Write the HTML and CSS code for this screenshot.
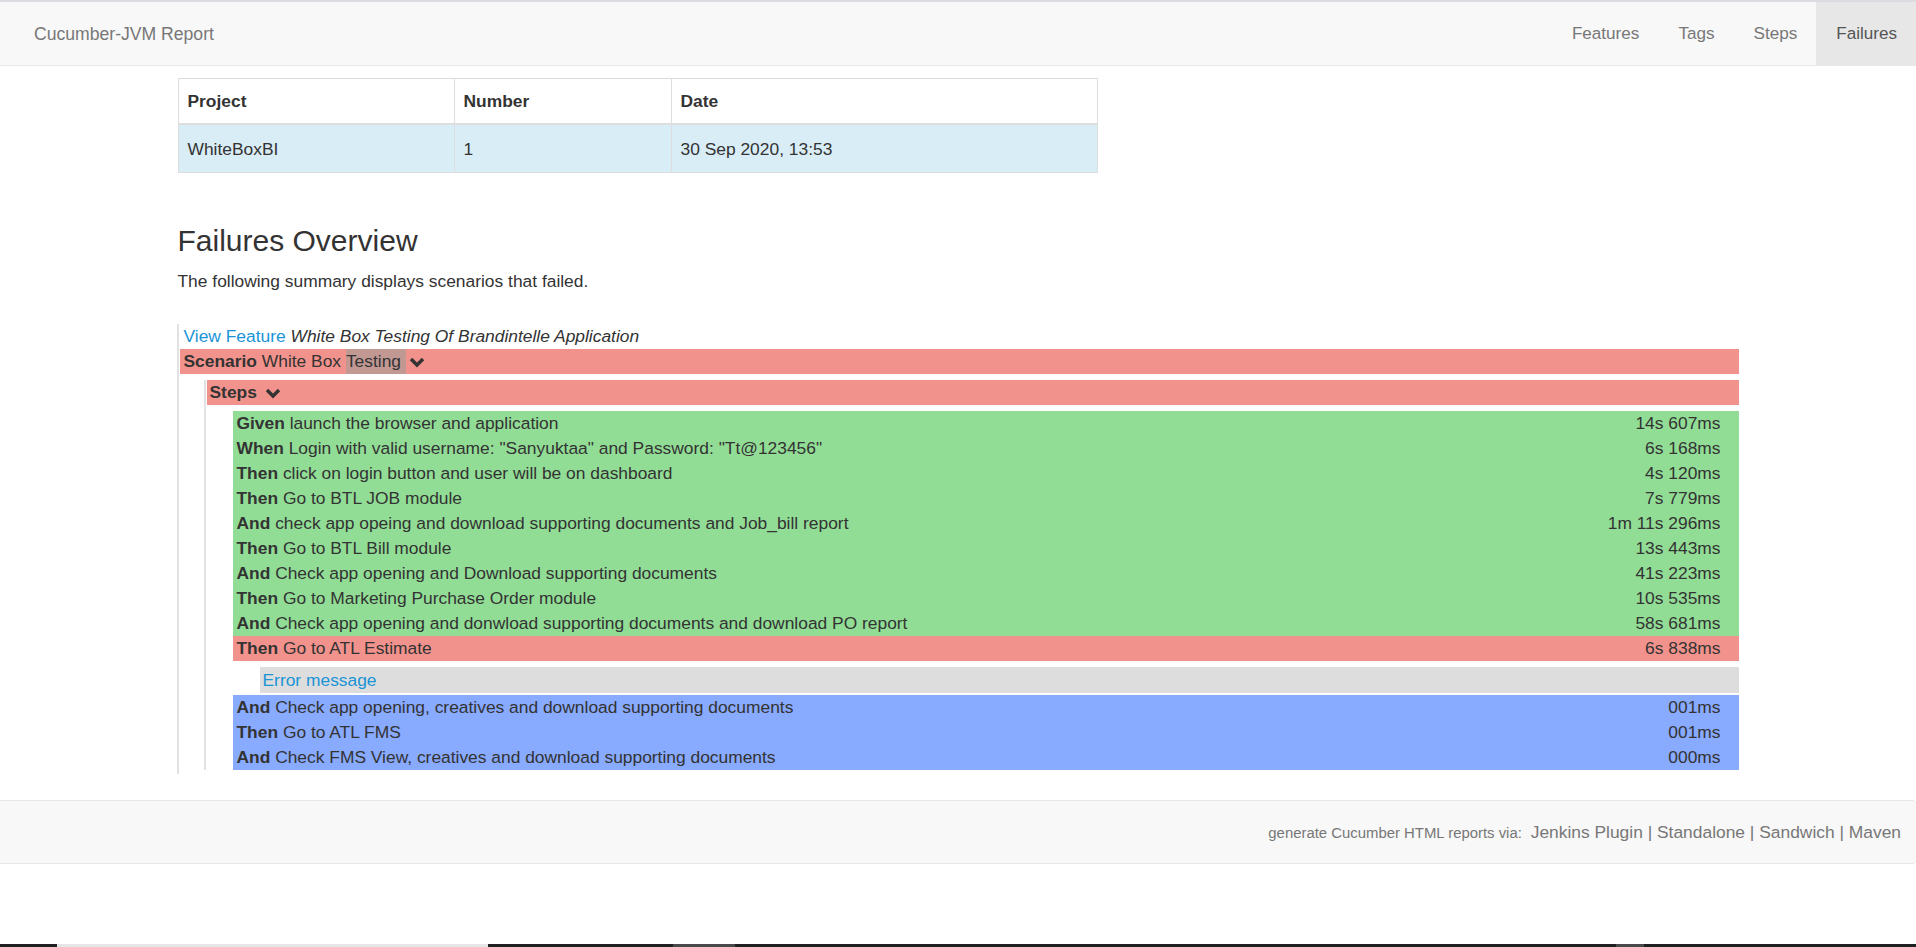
FILE: index.html
```html
<!DOCTYPE html>
<html lang="en">
<head>
<meta charset="utf-8">
<title>Cucumber-JVM Report - Failures Overview</title>
<link rel="stylesheet" href="styles.css">
</head>
<body>
<nav class="navbar">
  <a class="brand" href="#">Cucumber-JVM Report</a>
  <ul class="nav">
    <li><a href="#">Features</a></li>
    <li><a href="#">Tags</a></li>
    <li><a href="#">Steps</a></li>
    <li class="active"><a href="#">Failures</a></li>
  </ul>
</nav>

<main class="container">
  <table class="stats">
    <thead>
      <tr><th class="c1">Project</th><th class="c2">Number</th><th class="c3">Date</th></tr>
    </thead>
    <tbody>
      <tr><td>WhiteBoxBI</td><td>1</td><td>30 Sep 2020, 13:53</td></tr>
    </tbody>
  </table>

  <h2 class="title">Failures Overview</h2>
  <p class="lead">The following summary displays scenarios that failed.</p>

  <section class="feature">
    <div class="feature-line"><a href="#">View Feature</a> <i>White Box Testing Of Brandintelle Application</i></div>
    <div class="bar failed scenario-bar"><b>Scenario</b> White Box <span class="hl">Testing </span><svg class="chev" viewBox="0 0 16 12" width="16" height="12"><polyline points="2,3 8,9 14,3"/></svg></div>
    <div class="steps-wrap">
      <div class="bar failed steps-bar"><b>Steps</b> <svg class="chev" viewBox="0 0 16 12" width="16" height="12"><polyline points="2,3 8,9 14,3"/></svg></div>
      <div class="steps">
        <div class="step passed"><span><b>Given</b> launch the browser and application</span><span class="dur">14s 607ms</span></div>
        <div class="step passed"><span><b>When</b> Login with valid username: "Sanyuktaa" and Password: "Tt@123456"</span><span class="dur">6s 168ms</span></div>
        <div class="step passed"><span><b>Then</b> click on login button and user will be on dashboard</span><span class="dur">4s 120ms</span></div>
        <div class="step passed"><span><b>Then</b> Go to BTL JOB module</span><span class="dur">7s 779ms</span></div>
        <div class="step passed"><span><b>And</b> check app opeing and download supporting documents and Job_bill report</span><span class="dur">1m 11s 296ms</span></div>
        <div class="step passed"><span><b>Then</b> Go to BTL Bill module</span><span class="dur">13s 443ms</span></div>
        <div class="step passed"><span><b>And</b> Check app opening and Download supporting documents</span><span class="dur">41s 223ms</span></div>
        <div class="step passed"><span><b>Then</b> Go to Marketing Purchase Order module</span><span class="dur">10s 535ms</span></div>
        <div class="step passed"><span><b>And</b> Check app opening and donwload supporting documents and download PO report</span><span class="dur">58s 681ms</span></div>
        <div class="step failed"><span><b>Then</b> Go to ATL Estimate</span><span class="dur">6s 838ms</span></div>
        <div class="error"><a href="#">Error message</a></div>
        <div class="step skipped"><span><b>And</b> Check app opening, creatives and download supporting documents</span><span class="dur">001ms</span></div>
        <div class="step skipped"><span><b>Then</b> Go to ATL FMS</span><span class="dur">001ms</span></div>
        <div class="step skipped"><span><b>And</b> Check FMS View, creatives and download supporting documents</span><span class="dur">000ms</span></div>
      </div>
    </div>
  </section>
</main>

<footer class="footer">
  <span class="gen">generate Cucumber HTML reports via:</span> <a href="#">Jenkins Plugin</a> | <a href="#">Standalone</a> | <a href="#">Sandwich</a> | <a href="#">Maven</a>
</footer>

<div class="taskbar">
  <span class="tb-light"></span>
  <span class="tb-gray1"></span>
  <span class="tb-gray2"></span>
</div>
</body>
</html>
```

FILE: styles.css
```css
* { box-sizing: border-box; }

html, body {
  margin: 0;
  padding: 0;
  background: #fff;
}

body {
  font-family: "Liberation Sans", Arial, sans-serif;
  font-size: 17.4px;
  line-height: 24px;
  color: #333;
}

a { text-decoration: none; }

/* Navbar */
.navbar {
  display: flex;
  justify-content: space-between;
  align-items: stretch;
  height: 66px;
  background: #f8f8f8;
  border-top: 2px solid #dcdce0;
  border-bottom: 1px solid #e7e7e7;
}

.brand {
  display: flex;
  align-items: center;
  padding-left: 34px;
  font-size: 17.6px;
  color: #777;
}

.nav {
  display: flex;
  list-style: none;
  margin: 0;
  padding: 0;
}

.nav li a {
  display: flex;
  align-items: center;
  height: 100%;
  padding: 0 19px 0 20px;
  color: #777;
  font-size: 17.1px;
}

.nav li.active a {
  background: #e7e7e7;
  color: #555;
}

/* Main */
.container {
  width: 1561px;
  margin: 0 auto;
}

.stats {
  margin-top: 12px;
  width: 920px;
  border-collapse: collapse;
  border: 1px solid #ddd;
}

.stats th,
.stats td {
  text-align: left;
  padding: 10px 9px;
  border: 1px solid #ddd;
  line-height: 24px;
}

.stats th {
  font-weight: bold;
  border-bottom: 2px solid #ddd;
}

.stats td {
  padding-top: 12px;
  padding-bottom: 11px;
  background: #d9edf7;
}

.stats .c1 { width: 276px; }
.stats .c2 { width: 217px; }

.title {
  margin: 51px 0 0;
  font-size: 30px;
  font-weight: normal;
  line-height: 33px;
  color: #333;
}

.lead {
  margin: 12px 0 0;
}

/* Feature block */
.feature {
  margin-top: 31px;
  margin-left: -1px;
  padding: 0 0 4px 1px;
  border-left: 2px solid #e2e2e2;
}

.feature-line {
  padding-left: 4px;
  height: 24px;
  margin-bottom: 1px;
}

.feature-line a,
.error a {
  color: #1a94d6;
}

.bar {
  height: 25px;
  line-height: 25px;
  white-space: nowrap;
}

.scenario-bar {
  padding-left: 4px;
}

.hl {
  display: inline-block;
  height: 25px;
  background: #c29893;
  white-space: pre;
}

.chev {
  vertical-align: -1px;
  margin-left: 3px;
  fill: none;
  stroke: #333;
  stroke-width: 3.4;
}

.steps-bar .chev { margin-left: 3px; }

.steps-wrap {
  margin: 6px 0 0 24px;
  border-left: 2px solid #e2e2e2;
  padding-left: 1px;
}

.steps-bar {
  padding-left: 3px;
}

.steps {
  margin: 6px 0 0 26px;
}

.step {
  display: flex;
  justify-content: space-between;
  height: 25px;
  line-height: 25px;
  padding: 0 18px 0 4px;
  white-space: nowrap;
}

.passed { background: #92dd96; }
.failed { background: #f2928c; }
.skipped { background: #88aaff; }

.error {
  margin: 6px 0 2px 27px;
  height: 26px;
  line-height: 26px;
  padding-left: 3px;
  background: #dddddd;
}

/* Footer */
.footer {
  margin-top: 26px;
  height: 64px;
  line-height: 62px;
  text-align: right;
  padding-right: 15px;
  background: #f8f8f8;
  border-top: 1px solid #e7e7e7;
  border-bottom: 1px solid #e7e7e7;
  border-radius: 0 4px 4px 0;
  color: #777;
  font-size: 17.4px;
  white-space: nowrap;
}

.footer a { color: #777; }

.gen {
  font-size: 14.9px;
  margin-right: 4px;
}

/* bottom desktop taskbar edge */
.taskbar {
  position: fixed;
  left: 0;
  right: 0;
  bottom: 0;
  height: 3px;
  background: #202020;
}

.taskbar span {
  position: absolute;
  top: 0;
  height: 3px;
}

.tb-light { left: 57px; width: 431px; background: #e6e6e6; }
.tb-gray1 { left: 673px; width: 62px; background: #4a4a4a; }
.tb-gray2 { left: 1616px; width: 28px; background: #4a4a4a; }
```
